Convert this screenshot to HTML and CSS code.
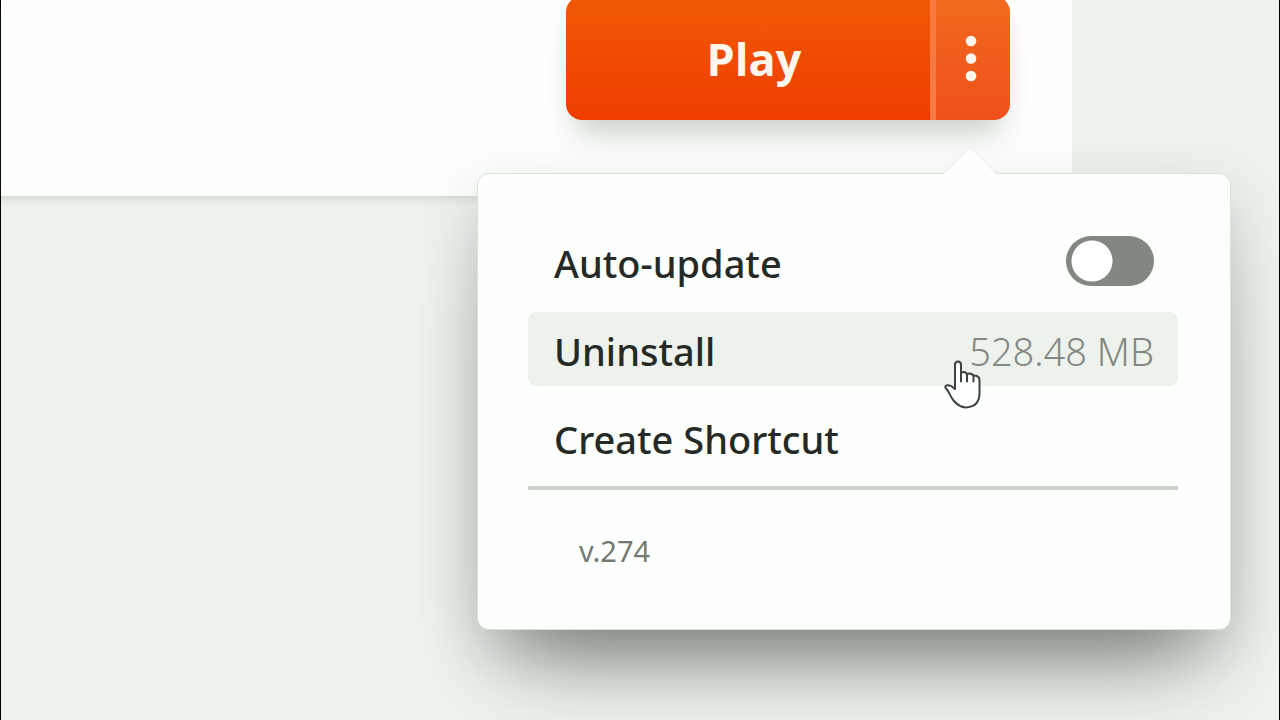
FILE: index.html
```
<!DOCTYPE html>
<html lang="en">
<head>
<meta charset="UTF-8">
<title>Play</title>
<meta name="viewport" content="width=device-width, initial-scale=1.0">
<link rel="stylesheet" href="styles.css">
</head>
<body>
    <div class="page">
        <header class="panel">
            <div class="play-box">
                <div class="play-group">
                    <button type="button" class="play">Play</button>
                    <button type="button" class="more" aria-label="More options">
                        <svg width="12" height="48" viewBox="0 0 12 48" fill="#fff7ee">
                            <circle cx="6" cy="6" r="5.3"/>
                            <circle cx="6" cy="23.5" r="5.3"/>
                            <circle cx="6" cy="41" r="5.3"/>
                        </svg>
                    </button>
                </div>
                <div class="menu">
                    <svg class="arrow" width="60" height="29" viewBox="0 0 60 29">
                        <path d="M0 29 Q4 28 7 25 L30 1 L53 25 Q56 28 60 29Z" fill="#fdfffc"/>
                        <path d="M0 27.5 Q4 27 7 24 L30 1 L53 24 Q56 27 60 27.5" fill="none" stroke="#e3e7e2"/>
                    </svg>
                    <ul>
                        <li>
                            <label class="item" for="auto">Auto-update
                                <input type="checkbox" id="auto" class="switch">
                            </label>
                        </li>
                        <li><button type="button" class="item on">Uninstall <span class="size">528.48 MB</span></button></li>
                        <li><button type="button" class="item">Create Shortcut</button></li>
                    </ul>
                    <p class="version">v.274</p>
                    <svg class="hand" width="40" height="50" viewBox="0 0 40 50">
                        <path d="M12 29 V5 Q12 1.500 15 1.500 Q18 1.500 18 5 V12.500 Q22 11 24 14 Q28 12.500 30.500 15.500 Q36.500 15.500 36.500 20 V34 Q36 47 22.500 47.500 Q16 47 10.500 40.500 C7 36 6.500 32.500 3.500 29 Q1 26.500 3.500 25.500 Q7 24.500 12 29 Z" fill="#fff" stroke="#3c423e" stroke-width="2" stroke-linejoin="round"/>
                        <path d="M18 12 V21.500 M24 14 V21.500 M30.500 15.500 V21.500" fill="none" stroke="#3c423e" stroke-width="2" stroke-linecap="round"/>
                    </svg>
                </div>
            </div>
        </header>
    </div>
</body>
</html>
```

FILE: styles.css
```
*{margin:0;padding:0;list-style:none;box-sizing:border-box;}
body{background:#edf2ed;font-family:"Noto Sans","Open Sans",sans-serif;color:#252a26;overflow:hidden;}
button{border:0;background:none;font:inherit;color:inherit;cursor:pointer;}
.page{min-height:100vh;border:solid #000;border-width:0 1px;}

.panel{display:flex;justify-content:flex-end;margin-right:207px;padding:0 62px 76px 0;background:#fdfffc;box-shadow:-8px 3px 10px -2px rgba(40,60,45,.2);}
.play-box{position:relative;width:444px;margin-top:-4px;}
.play-group{display:flex;height:124px;border-radius:16px;overflow:hidden;background:linear-gradient(#f05a04,#ef3d02);box-shadow:0 22px 30px -10px rgba(30,50,35,.24);}
.play{flex:1;padding:2px 0 0 12px;color:#fff7ee;font-family:"Open Sans",sans-serif;font-size:45px;font-weight:700;line-height:64px;}
.more{display:flex;align-items:center;justify-content:center;width:80px;padding:2px 4px 0 0;border-left:6px solid #f77a43;background:rgba(255,255,255,.1);}

.menu{position:absolute;z-index:1;top:177px;right:-221px;width:754px;padding:50px 52px 58px 50px;border:1px solid #dce1dc;border-radius:12px;background:#fdfffc;box-shadow:0 64px 80px -40px rgba(20,26,20,.46),0 24px 60px -2px rgba(20,26,20,.2);}
.menu ul{display:grid;gap:14px;padding-bottom:12px;border-bottom:4px solid #cbd0cb;}
.arrow{position:absolute;top:-28px;right:230px;}
.item{display:flex;align-items:center;justify-content:space-between;width:100%;height:74px;padding:4px 24px 0 26px;border-radius:8px;font-size:38px;font-weight:500;line-height:52px;text-align:left;cursor:pointer;}
.item.on{background:#edf2ed;}
.size{color:#838984;font-weight:300;}
.switch{appearance:none;width:88px;height:50px;margin-bottom:4px;border-radius:25px;background:radial-gradient(circle at 26px 25px,#fff 20px,#828780 21px);cursor:pointer;}
.version{padding:41px 51px 0;color:#737a74;font-size:29px;line-height:40px;}
.hand{position:absolute;top:186px;left:465px;pointer-events:none;}
```
